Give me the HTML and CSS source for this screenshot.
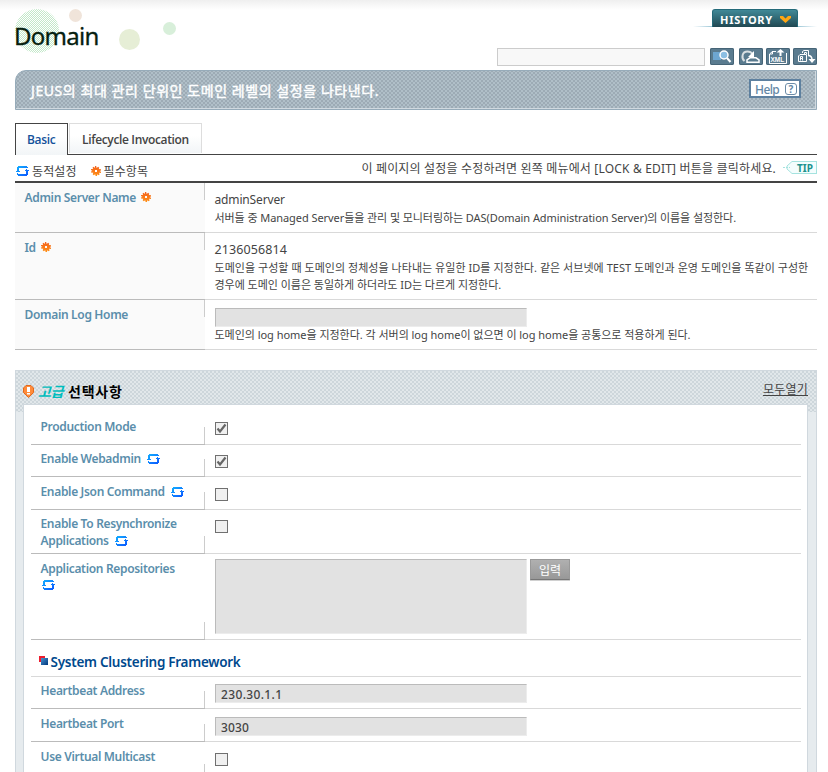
FILE: index.html
```html
<!DOCTYPE html>
<html lang="ko">
<head>
<meta charset="utf-8">
<title>Domain</title>
<link rel="stylesheet" href="styles.css">
</head>
<body>
<svg class="defs" width="0" height="0" aria-hidden="true">
  <defs>
    <linearGradient id="blue" x1="0" y1="0" x2="1" y2="1"><stop offset="0" stop-color="#13b4ff"/><stop offset="1" stop-color="#0b52ff"/></linearGradient>
    <linearGradient id="orange" x1="0" y1="0" x2="0" y2="1"><stop offset="0" stop-color="#f4601c"/><stop offset="1" stop-color="#ff9218"/></linearGradient>
    <linearGradient id="navy" x1="0" y1="0" x2="1" y2="1"><stop offset="0" stop-color="#4a93cf"/><stop offset="1" stop-color="#00377d"/></linearGradient>
  </defs>
  <symbol id="sync" viewBox="0 0 13 10"><path fill="url(#blue)" shape-rendering="crispEdges" d="M2 0h9v1h1v1H3v3h1v1H0V5h1V1h1zM10 3h1v1h2v1h-1v4h-1v1H2V9H1V7h1v1h8V5H9V4h1z"/></symbol>
  <symbol id="gear" viewBox="0 0 10 10"><path fill="url(#orange)" fill-rule="evenodd" d="M4 0h1.200l.4 2L7.200.8l1 1L7.800 3 10 3.200v1.200L8.500 5 10 5.800V7l-2-.2.600 1.600-1 .8L6.300 8.200 6 10H4.600l-.4-1.800L2.700 9.300l-1-1 .6-1.500L0 6.600V5.400L1.500 5 0 4V2.900l2.200.2L1.500 1.700l1-1L3.800 2zM4 4v2h2V4z"/></symbol>
</svg>
<div class="page">
  <header class="top">
    <div class="brand">
      <i class="dot dot-a"></i><i class="dot dot-b"></i><i class="dot dot-c"></i><i class="dot dot-d"></i>
      <h1>Domain</h1>
    </div>
    <div class="tools">
      <div class="history"><span class="history-tab"><b>HISTORY</b><svg width="11" height="7" viewBox="0 0 11 7"><path fill="#ffa614" d="M0 0h3l2.500 2.500L8 0h3v2L5.500 7 0 2z"/></svg></span></div>
      <div class="search">
        <span class="search-input"></span>
        <span class="tool"><svg width="24" height="17" viewBox="0 0 24 17"><path fill="#6da6d1" d="M3 4h8v8H3z"/><circle cx="14" cy="7" r="4" fill="#8bbfe3" stroke="#fff" stroke-width="1.500"/><path d="M17 10l3.500 4" stroke="#fff" stroke-width="2"/></svg></span>
        <span class="tool t2"><svg width="24" height="17" viewBox="0 0 24 17" fill="none" stroke="#fff"><path stroke="#d8dfe2" stroke-width="2" d="M5.500 13C2 10 3 3.500 8.500 3.500c3 0 4 1 5 2.500"/><path fill="#fff" stroke="none" d="M15 3v6H9z"/><path stroke-width="1.500" d="M11 9.800h6l3 2.200v2.300H8V12z"/></svg></span>
        <span class="tool t3"><svg width="24" height="17" viewBox="0 0 24 17" fill="none" stroke="#fff"><path d="M10 3.500H6.500L3.500 6v9.500h17V5M6.500 3v3H4"/><path fill="#fff" stroke="none" d="M14.500 1l4 3.500h-3V8h-2V4.500h-3z"/><text x="4.500" y="13.500" class="mini">XML</text></svg></span>
        <span class="tool t4"><svg width="24" height="17" viewBox="0 0 24 17" fill="none" stroke="#fff"><path d="M9.500 5V3.500l1.500-1h4.500V8M5.500 8l1.500-1.500h6.500v7h-8z"/><path d="M7.500 12.500V8.500h2v2H8M9.500 10.500v2M11.500 6V4.500h2V6"/><path stroke-width="1.500" d="M15 7.500c3 0 4 1.500 4 4.500"/><path fill="#fff" stroke="none" d="M15.500 11h7L19 15z"/></svg></span>
      </div>
    </div>
  </header>

  <section class="banner">
    <p>JEUS의 최대 관리 단위인 도메인 레벨의 설정을 나타낸다.</p>
    <a class="help"><span>Help</span><i>?</i></a>
  </section>

  <nav class="tabs"><a class="tab on">Basic</a><a class="tab off">Lifecycle Invocation</a></nav>

  <div class="legend">
    <span class="legend-l"><svg class="sync"><use href="#sync"/></svg><span class="lg1">동적설정</span><svg class="gear"><use href="#gear"/></svg><span class="lg2">필수항목</span></span>
    <span class="legend-r"><span class="tiptext">이 페이지의 설정을 수정하려면 왼쪽 메뉴에서 [LOCK &amp; EDIT] 버튼을 클릭하세요.</span><span class="tip"><svg width="11" height="13" viewBox="0 0 11 13"><path fill="#f4fdfd" stroke="#a5e3df" d="M11 .5H9L4 5v3l5 4.500h2"/><path stroke="#a5e3df" stroke-dasharray="2 1" d="M0 6.500h7"/></svg><b>TIP</b></span></span>
  </div>

  <div class="main">
    <div class="row r1"><div class="label"><span>Admin Server Name</span><svg class="gear"><use href="#gear"/></svg></div><div class="val"><p class="v">adminServer</p><p class="desc d1">서버들 중 Managed Server들을 관리 및 모니터링하는 DAS(Domain Administration Server)의 이름을 설정한다.</p></div></div>
    <div class="row r2"><div class="label"><span>Id</span><svg class="gear"><use href="#gear"/></svg></div><div class="val"><p class="v num">2136056814</p><p class="desc d2">도메인을 구성할 때 도메인의 정체성을 나타내는 유일한 ID를 지정한다. 같은 서브넷에 TEST 도메인과 운영 도메인을 똑같이 구성한</p><p class="desc">경우에 도메인 이름은 동일하게 하더라도 ID는 다르게 지정한다.</p></div></div>
    <div class="row r3"><div class="label"><span>Domain Log Home</span></div><div class="val"><div class="field"></div><p class="desc">도메인의 log home을 지정한다. 각 서버의 log home이 없으면 이 log home을 공통으로 적용하게 된다.</p></div></div>
  </div>

  <section class="adv">
    <div class="adv-head">
      <svg width="11" height="13" viewBox="0 0 11 13"><path fill="#ff8b3a" stroke="#e46a1c" d="M3 .5h5L10.500 3v4.500L8 10 5.500 12.500 3 10 .5 7.500V3z"/><path fill="#fff" d="M4 2h3v5H4zM4 8h3v1.500H4z"/></svg>
      <em>고급</em><strong>선택사항</strong><a>모두열기</a>
    </div>
    <div class="adv-body">
      <div class="arow a1"><div class="al">Production Mode</div><div class="av"><i class="cb on"><svg width="11" height="11" viewBox="0 0 11 11"><path d="M1.500 5.500L4 8.500 9.500 1.500" fill="none" stroke="#666" stroke-width="2.200"/></svg></i></div></div>
      <div class="arow a2"><div class="al">Enable Webadmin<svg class="sync"><use href="#sync"/></svg></div><div class="av"><i class="cb on"><svg width="11" height="11" viewBox="0 0 11 11"><path d="M1.500 5.500L4 8.500 9.500 1.500" fill="none" stroke="#666" stroke-width="2.200"/></svg></i></div></div>
      <div class="arow a3"><div class="al">Enable Json Command<svg class="sync"><use href="#sync"/></svg></div><div class="av"><i class="cb"></i></div></div>
      <div class="arow a4"><div class="al">Enable To Resynchronize<br>Applications<svg class="sync"><use href="#sync"/></svg></div><div class="av"><i class="cb"></i></div></div>
      <div class="arow a5"><div class="al">Application Repositories<br><svg class="sync first"><use href="#sync"/></svg></div><div class="av"><div class="area"></div><a class="btn">입력</a></div></div>
      <h2><svg width="9" height="9" viewBox="0 0 9 9"><path fill="#ed1c2e" d="M0 0h6v6H0z"/><path fill="#fff" d="M2 2h7v7H2z"/><path fill="url(#navy)" d="M2 2h7v7H2z"/></svg><span>System Clustering Framework</span></h2>
      <div class="arow a6"><div class="al">Heartbeat Address</div><div class="av"><div class="field">230.30.1.1</div></div></div>
      <div class="arow a7"><div class="al">Heartbeat Port</div><div class="av"><div class="field">3030</div></div></div>
      <div class="arow a8"><div class="al">Use Virtual Multicast</div><div class="av"><i class="cb"></i></div></div>
    </div>
  </section>
</div>
</body>
</html>
```
FILE: styles.css
```css
* { box-sizing: border-box; }
html, body { margin: 0; height: 772px; overflow: hidden; }
body { background: #fff; color: #444; font: 12px/17px "Noto Sans", "Noto Sans CJK KR", sans-serif; white-space: nowrap; }
p, h1, h2 { margin: 0; font-weight: 400; }
svg { display: block; flex: none; }
.defs { position: absolute; }
.page { height: 772px; padding: 0 11px 0 15px; background: linear-gradient(#efefef, #fff 10px) no-repeat 0 0 / 100% 10px; overflow: hidden; }

.top { height: 70px; display: flex; justify-content: space-between; }
.brand { position: relative; width: 200px; padding-top: 20px; }
.brand h1 { position: relative; margin-left: -1px; font: 24px/32px "Noto Sans", sans-serif; color: #06200f; letter-spacing: -0.75px; -webkit-text-stroke: .3px #06200f; }
.dot { position: absolute; border-radius: 50%; }
.dot-a { left: 0; top: 9px; width: 44px; height: 44px; background: repeating-conic-gradient(#c3e8c9 0 25%, #fff 0 50%) 0 0 / 2px 2px; }
.dot-b { left: 54px; top: 9px; width: 13px; height: 13px; background: #f0e4da; }
.dot-c { left: 104px; top: 29px; width: 21px; height: 21px; background: #e6eed6; }
.dot-d { left: 148px; top: 22px; width: 13px; height: 13px; background: #d8efda; }

.tools { width: 320px; display: flex; flex-direction: column; align-items: flex-end; }
.history { margin-top: 9px; width: 124px; height: 18px; padding-left: 19px; background: linear-gradient(90deg, #fff, #7fb6cb 20%, #7fb6cb 80%, #fff) no-repeat 0 17px / 100% 1px; }
.history-tab { width: 86px; height: 18px; display: flex; align-items: center; gap: 7px; padding: 2px 0 0 7px; border: 1px solid #246a79; border-bottom: 0; border-radius: 3px 3px 0 0; background: linear-gradient(#418997, #204852); }
.history-tab b { width: 53px; color: #fff; font: 700 11px/14px "Noto Sans", sans-serif; letter-spacing: .75px; }
.search { margin-top: 20px; display: flex; align-items: center; height: 19px; }
.search-input { width: 208px; height: 18px; border: 1px solid #ccc; background: #f8f8f8; margin-right: 5px; }
.tool { width: 24px; height: 17px; border-radius: 2px; background: #5a7b8f; box-shadow: inset 0 0 0 1px #466476; }
.t2 { margin-left: 5px; }
.t3, .t4 { margin-left: 3px; }
.mini { font: 700 6.500px "Liberation Sans", sans-serif; fill: #fff; stroke: none; }

.banner { height: 40px; display: flex; justify-content: space-between; align-items: flex-start; padding: 10px 15px 0 15px; border: 1px solid #96abb9; border-radius: 11px 0 0 0; background: radial-gradient(circle, #9dabb5 0 .8px, transparent 1.300px) 0 0 / 4px 4px, radial-gradient(circle, #9dabb5 0 .8px, transparent 1.300px) 2px 2px / 4px 4px, #b0bfc8; box-shadow: inset -1px -1px #d0d9df; }
.banner p { font-size: 14px; line-height: 19px; color: #fff; letter-spacing: .57px; -webkit-text-stroke: .4px #fff; }
.help { display: flex; gap: 6px; width: 52px; height: 19px; margin-top: -2px; padding: 1px 2px 0 4px; border: 2px solid #5d809f; background: #fff; color: #6487a5; font-size: 12px; line-height: 15px; }
.help span { width: 24px; letter-spacing: -.6px; font-weight: 500; }
.help i { width: 12px; height: 12px; margin-top: 1px; border: 1px solid #6b8ba6; border-radius: 3px; font: 700 10px/10px "Noto Sans", sans-serif; text-align: center; }

.tabs { height: 32px; margin-top: 13px; display: flex; border-bottom: 1px solid #444; }
.tab { background: linear-gradient(#fff 40%, #f2f5f7); font: 600 12px/32px "Open Sans", sans-serif; letter-spacing: -.35px; }
.tab.on { width: 53px; height: 32px; padding-left: 11px; border: 1px solid #444; border-bottom: 0; color: #13529a; }
.tab.off { width: 133px; height: 30px; margin-left: 1px; padding-left: 12px; border: 1px solid #ddd; border-bottom: 0; }

.legend { height: 28px; display: flex; justify-content: space-between; border-bottom: 2px solid #444; }
.legend-l { display: flex; align-items: center; padding-top: 6px; letter-spacing: .1px; }
.sync { width: 13px; height: 10px; }
.gear { width: 10px; height: 10px; }
.legend-l .sync { margin: 0 3px 0 1px; }
.legend-l .gear { margin-left: 14px; margin-right: 3px; }
.legend-r { display: flex; padding-top: 5px; }
.tiptext { letter-spacing: .18px; }
.tip { display: flex; height: 13px; margin: 1px 0 0 7px; }
.tip b { width: 23px; border: 1px solid #a5e3df; border-left: 0; background: #f4fdfd; color: #20928e; font: 700 10px/12px "Noto Sans", sans-serif; padding-left: 3px; }

.row { display: grid; grid-template-columns: 190px 1fr; border-bottom: 1px solid #d9d9d9; }
.r1 { height: 50px; }
.r2 { height: 67px; }
.r3 { height: 50px; }
.label { display: flex; align-items: flex-start; padding: 6px 0 0 9.500px; margin-bottom: -1px; background: linear-gradient(#ccc, #ccc) no-repeat 100% 0 / 1px 17px, #fafafa; border-bottom: 1px solid #bbb; }
.label, .al { color: #5a8eab; font-weight: 600; letter-spacing: -.33px; }
.label .gear { margin: 3px 0 0 5px; }
.val { padding: 8px 0 0 9.500px; }
.v { height: 18px; line-height: 18px; font-size: 12px; letter-spacing: -.15px; }
.v.num { font-size: 12.500px; letter-spacing: .1px; }
.desc { font-size: 11px; line-height: 17px; letter-spacing: -.03px; }
.desc.d1 { letter-spacing: -.07px; }
.desc.d2 { letter-spacing: .04px; }
.field { width: 312px; height: 19px; border: 1px solid #ececec; border-top-color: #bbb; border-left-color: #bbb; background: #e2e2e2; }
.r3 .desc { line-height: 16px; }

.adv { position: relative; margin-top: 20px; height: 420px; padding: 0 8px 0 7px; border: 1px solid #d0d8de; background: #e6ebee; }
.adv::before { content: ""; position: absolute; left: 0; top: 0; width: 100%; height: 41px; background: repeating-conic-gradient(#cdd6db 0 25%, #e1e7ea 0 50%) 0 0 / 4px 4px; }
.adv-head { position: relative; height: 33px; display: flex; align-items: center; padding: 7px 0 0; }
.adv-head em { margin-left: 4px; width: 27px; color: #00bdbd; font-weight: 700; font-size: 14px; letter-spacing: -.2px; }
.adv-head strong { margin-left: 3px; color: #000; font-size: 14px; letter-spacing: .8px; }
.adv-head a { margin-left: auto; text-decoration: underline; padding-bottom: 4px; letter-spacing: .2px; }
.adv-body { position: relative; height: 390px; padding: 7px 6px 0 7px; border: 1px solid #d0d8de; background: #fff; }
.arow { display: grid; grid-template-columns: 174px 1fr; border-bottom: 1px solid #d9d9d9; }
.al { padding: 5px 0 0 9.500px; margin-bottom: -1px; border-bottom: 1px solid #bbb; background: linear-gradient(#ccc, #ccc) no-repeat 100% 100% / 1px 17px; }
.al .sync { display: inline-block; margin-left: 6px; vertical-align: -1px; }
.al .sync.first { margin-left: 1.500px; vertical-align: 0; }
.av { padding: 6px 0 0 10px; display: flex; align-items: flex-start; }
.a1 { height: 33px; }
.a1 .av, .a2 .av, .a4 .av { padding-top: 10px; }
.a1 .al, .a3 .al, .a5 .al, .a7 .al, .a8 .al { padding-top: 6px; }
.a2 { height: 32px; }
.a3 { height: 33px; }
.a3 .av { padding-top: 11px; }
.a4 { height: 44px; }
.a5 { height: 86px; }
.a5 .av { padding-top: 5px; }
.a6 { height: 32px; }
.a6 .av { padding-top: 7px; }
.a7 { height: 33px; }
.a7 .av { padding-top: 8px; }
.a8 { height: 40px; }
.a8 .av { padding-top: 11px; }
.cb { width: 13px; height: 13px; border: 1px solid #707070; background: #f0f0f0; }
.area { width: 312px; height: 75px; border: 1px solid #ececec; border-top-color: #bbb; border-left-color: #bbb; background: #e2e2e2; }
.btn { width: 40px; height: 21px; margin-left: 3px; border: 1px solid #999; border-bottom-color: #777; background: linear-gradient(#b0b0b0, #989898); color: #fff; text-align: center; line-height: 21px; box-shadow: 0 1px #d0d0d0; }
.adv-body h2 { display: flex; height: 37px; padding: 6px 0 0 8px; border-bottom: 1px solid #d9d9d9; font: 650 13.500px/18px "Noto Sans", sans-serif; color: #00498d; }
.adv-body h2 svg { margin: 10px 2.500px 0 0; }
.adv-body h2 span { padding-top: 7px; letter-spacing: -.27px; }
.av .field { padding-left: 5px; line-height: 19px; font-size: 12px; font-weight: 500; letter-spacing: .35px; }
.a7 .av .field { letter-spacing: .1px; }
```
